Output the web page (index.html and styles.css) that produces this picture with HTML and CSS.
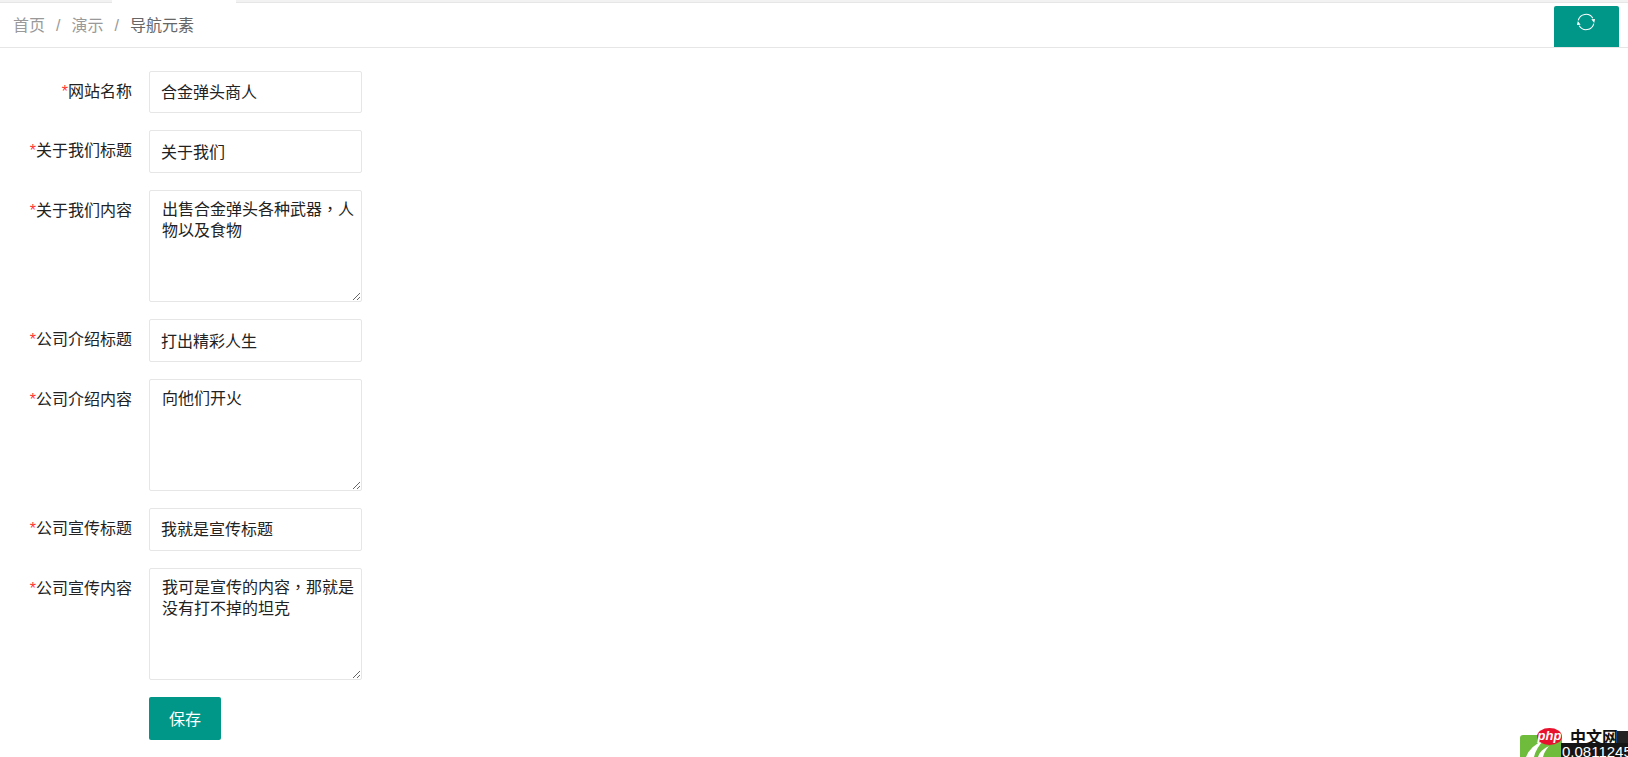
FILE: index.html
```html
<!DOCTYPE html>
<html lang="zh">
<head>
<meta charset="UTF-8">
<title>导航元素</title>
<link rel="stylesheet" href="styles.css">
</head>
<body>
<div class="tabs"><div class="tab-active"></div></div>
<div class="topbar">
	<div class="crumbs">
		<a>首页</a><span class="sep">/</span><a>演示</a><span class="sep">/</span><cite>导航元素</cite>
	</div>
	<button class="refresh" type="button">
		<svg width="20" height="20" viewBox="0 0 20 20" fill="none" stroke="#fff" stroke-width="1.1">
			<path d="M2.2 8.4A8 8 0 0 1 16.8 6.2"/>
			<path d="M17.8 11.6A8 8 0 0 1 3.2 13.8"/>
			<path d="M15.4 7.2l3.6-0.2-0.8 4z" fill="#fff" stroke="none"/>
			<path d="M4.6 12.8l-3.6 0.2 0.8-4z" fill="#fff" stroke="none"/>
		</svg>
	</button>
</div>
<form class="form">
	<div class="row">
		<label class="lbl"><i>*</i>网站名称</label>
		<input class="field" type="text" value="合金弹头商人">
	</div>
	<div class="row">
		<label class="lbl"><i>*</i>关于我们标题</label>
		<input class="field" type="text" value="关于我们">
	</div>
	<div class="row">
		<label class="lbl"><i>*</i>关于我们内容</label>
		<textarea class="field area" lang="zh-TW">出售合金弹头各种武器，人物以及食物</textarea>
	</div>
	<div class="row">
		<label class="lbl"><i>*</i>公司介绍标题</label>
		<input class="field" type="text" value="打出精彩人生">
	</div>
	<div class="row">
		<label class="lbl"><i>*</i>公司介绍内容</label>
		<textarea class="field area" lang="zh-TW">向他们开火</textarea>
	</div>
	<div class="row">
		<label class="lbl"><i>*</i>公司宣传标题</label>
		<input class="field" type="text" value="我就是宣传标题">
	</div>
	<div class="row">
		<label class="lbl"><i>*</i>公司宣传内容</label>
		<textarea class="field area" lang="zh-TW">我可是宣传的内容，那就是没有打不掉的坦克</textarea>
	</div>
	<div class="row">
		<span class="lbl"></span>
		<button class="save" type="button">保存</button>
	</div>
</form>
<div class="watermark">
	<div class="wm-logo">
		<svg width="42" height="22" viewBox="0 0 42 22">
			<path d="M0 3q0-3 3-3h39v22H0z" fill="#6fbb3c"/>
			<path d="M6 22Q10 11 24 5Q16 13 14 22z" fill="#fff"/>
			<path d="M18 22Q20 15 29 11Q24 17 23 22z" fill="#fff"/>
		</svg>
	</div>
	<span class="wm-cn">中文网</span>
	<div class="wm-end"></div>
	<div class="wm-dark"><span class="wm-num">0.0811245</span></div>
	<span class="wm-php">php</span>
</div>
</body>
</html>
```

FILE: styles.css
```css
html, body {margin:0; padding:0; height:757px; overflow:hidden; background:#fff;}
body {font-family:"Liberation Sans", "Noto Sans CJK SC", sans-serif; font-size:14px; color:#333; position:relative;}

.tabs {height:2px; border-bottom:1px solid #e6e6e6; background:#f2f2f2; padding-left:112px;}
.tab-active {width:124px; height:3px; background:#fff;}

.topbar {display:flex; justify-content:space-between; align-items:stretch; height:44px; border-bottom:1px solid #e6e6e6; padding-right:9px;}
.crumbs {padding:11px 0 0 13px; font-size:16px; line-height:24px; color:#999;}
.crumbs a {color:#999;}
.crumbs cite {font-style:normal; color:#666;}
.sep {margin:0 11px;}
.refresh {width:65px; height:41px; margin-top:3px; padding:0 2px 10px 0; border:0; border-radius:2px 2px 0 0; background:#009688; display:flex; align-items:center; justify-content:center;}

.form {padding-top:22.7px;}
.row {display:flex; margin-bottom:17px;}
.lbl {width:132px; flex:none; padding-top:10px; text-align:right; font-size:16px; line-height:22px; color:#222;}
.lbl i {font-style:normal; color:#f33;}
.field {width:213px; height:42.75px; box-sizing:border-box; margin-left:17px; padding:0 11px 2px; border:1px solid #e6e6e6; border-radius:2px; background:#fff; font-family:inherit; font-size:16px; color:#222; outline:none;}
.area {height:112px; padding:8px 6px 8px 12px; font-family:"Liberation Sans", "Noto Sans CJK TC", sans-serif; line-height:21px; resize:vertical;}
.save {width:72px; height:43px; margin-left:17px; border:0; border-radius:2px; background:#009688; color:#fff; font-family:inherit; font-size:16px;}

.watermark {position:absolute; right:0; bottom:0; width:108px; height:29px; overflow:hidden;}
.wm-logo {position:absolute; left:0; top:7px;}
.wm-cn {position:absolute; left:50px; top:2px; font-size:16px; font-weight:bold; line-height:16px; color:#111; white-space:nowrap;}
.wm-end {position:absolute; left:97px; top:3px; right:0; height:12px; background:#222;}
.wm-dark {position:absolute; left:41px; top:15px; right:0; bottom:0; background:#151515; color:#fff;}
.wm-num {display:block; padding:1px 0 0 1px; font-size:15px; line-height:15px; white-space:nowrap;}
.wm-php {position:absolute; left:17px; top:0; width:25px; height:17px; border-radius:50%; background:#e8112d; color:#fff; font-size:13px; font-style:italic; font-weight:bold; line-height:15px; text-align:center;}
```
